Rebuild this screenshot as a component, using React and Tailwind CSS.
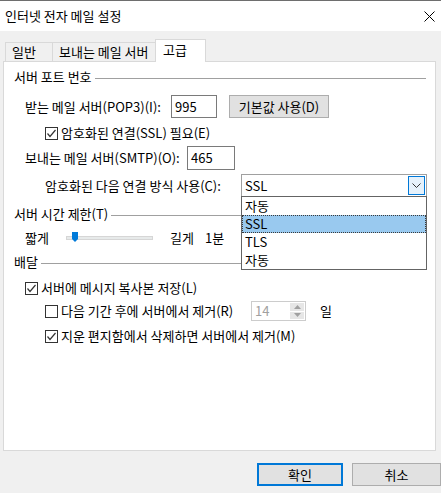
import React from "react";

function CheckBox({ checked }) {
  return (
    <div className="w-[13px] h-[13px] border border-[#333333] bg-white shrink-0 flex items-center justify-center">
      {checked && (
        <svg width="11" height="11" viewBox="0 0 11 11">
          <polyline
            points="1.5,5.5 4,8.5 9.5,2"
            fill="none"
            stroke="#333333"
            strokeWidth="1.2"
          />
        </svg>
      )}
    </div>
  );
}

function GroupHeader({ label, className }) {
  return (
    <div className={"h-[18px] flex items-center pl-[10px] pr-[9px] " + className}>
      <span className="whitespace-nowrap">{label}</span>
      <div className="flex-1 h-px bg-[#a0a0a0] ml-[3px] mt-[2px]" />
    </div>
  );
}

export default function App() {
  const items = ["자동", "SSL", "TLS", "자동"];

  return (
    <div className="w-[441px] h-[493px] bg-[#f0f0f0] border-t border-[#6e6e6e] overflow-hidden flex flex-col text-[13px] leading-[16px] text-black font-['Noto_Sans_CJK_KR','Malgun_Gothic',sans-serif]">
      <div className="h-[30px] bg-white flex items-center justify-between pl-[5px] pr-[6px] shrink-0">
        <span>인터넷 전자 메일 설정</span>
        <svg width="11" height="11" viewBox="0 0 11 11">
          <path d="M0.5 0.5 L10.5 10.5 M10.5 0.5 L0.5 10.5" stroke="#000" strokeWidth="1" />
        </svg>
      </div>

      <div className="h-[30px] flex items-end pl-[5px] shrink-0">
        <div className="w-[47px] h-[19px] border-t border-l border-[#d9d9d9] pl-[6px] flex items-center">
          일반
        </div>
        <div className="w-[103px] h-[19px] border-t border-l border-[#d9d9d9] pl-[6px] flex items-center whitespace-nowrap">
          보내는 메일 서버
        </div>
        <div className="relative z-10 w-[51px] h-[23px] -mb-px bg-white border-t border-l border-r border-[#d9d9d9] pl-[7px] flex items-center pb-[2px]">
          고급
        </div>
      </div>

      <div className="ml-[3px] w-[433px] h-[390px] bg-white border border-[#d9d9d9] flex flex-col shrink-0">
        <GroupHeader label="서버 포트 번호" className="mt-[6px]" />

        <div className="mt-[9px] h-[23px] flex items-center pl-[21px]">
          <span className="w-[146px] whitespace-nowrap">받는 메일 서버(POP3)(I):</span>
          <div className="w-[46px] h-[23px] border border-[#7a7a7a] px-[3px] flex items-center">995</div>
          <button className="ml-[12px] w-[100px] h-[23px] bg-[#e1e1e1] border border-[#adadad] flex items-center justify-center whitespace-nowrap">
            기본값 사용(D)
          </button>
        </div>

        <div className="mt-[6px] h-[18px] flex items-center pl-[41px]">
          <CheckBox checked />
          <span className="ml-[3px]">암호화된 연결(SSL) 필요(E)</span>
        </div>

        <div className="mt-[4px] h-[24px] flex items-center pl-[21px]">
          <span className="w-[162px] whitespace-nowrap">보내는 메일 서버(SMTP)(O):</span>
          <div className="w-[48px] h-[24px] border border-[#7a7a7a] px-[3px] flex items-center">465</div>
        </div>

        <div className="mt-[4px] h-[23px] flex items-center pl-[41px]">
          <span className="w-[196px] whitespace-nowrap">암호화된 다음 연결 방식 사용(C):</span>
          <div className="relative w-[186px] h-[23px] border border-[#a0a0a0] flex items-center bg-white">
            <span className="flex-1 pl-[3px]">SSL</span>
            <div className="w-[17px] h-[19px] mr-[1px] border border-[#0078d7] bg-[#e5f1fb] flex items-center justify-center">
              <svg width="9" height="5" viewBox="0 0 9 5">
                <polyline points="0.5,0.5 4.5,4.5 8.5,0.5" fill="none" stroke="#333" strokeWidth="1" />
              </svg>
            </div>
            <div className="absolute left-[-1px] top-full w-[186px] border border-[#646464] bg-white z-20">
              {items.map((it, i) => (
                <div
                  key={i}
                  className={
                    i === 1
                      ? "h-[18px] flex items-center pl-[2px] bg-[#99c9ef] border border-dotted border-[#3a3a3a]"
                      : "h-[18px] flex items-center pl-[3px]"
                  }
                >
                  {it}
                </div>
              ))}
            </div>
          </div>
        </div>

        <GroupHeader label="서버 시간 제한(T)" className="mt-[8px]" />

        <div className="mt-[6px] h-[18px] flex items-center pl-[21px]">
          <span className="w-[41px]">짧게</span>
          <div className="relative w-[87px] h-[18px] flex items-center">
            <div className="w-full h-[4px] bg-[#e7eaea] border border-[#d6d6d6]" />
            <svg className="absolute left-[6px] top-[3px]" width="6" height="10" viewBox="0 0 6 10">
              <polygon points="0,0 6,0 6,7 3,10 0,7" fill="#007ad9" />
            </svg>
          </div>
          <span className="ml-[17px] w-[35px]">길게</span>
          <span>1분</span>
        </div>

        <GroupHeader label="배달" className="mt-[6px]" />

        <div className="mt-[8px] h-[18px] flex items-center pl-[21px]">
          <CheckBox checked />
          <span className="ml-[3px]">서버에 메시지 복사본 저장(L)</span>
        </div>

        <div className="mt-[4px] h-[20px] flex items-center pl-[41px]">
          <CheckBox />
          <span className="ml-[3px] w-[190px] whitespace-nowrap">다음 기간 후에 서버에서 제거(R)</span>
          <div className="w-[55px] h-[20px] border border-[#cccccc] flex">
            <span className="flex-1 pl-[3px] flex items-center text-[#a0a0a0]">14</span>
            <div className="w-[16px] flex flex-col p-px gap-px">
              <div className="flex-1 bg-[#e6e6e6] flex items-center justify-center">
                <svg width="7" height="4" viewBox="0 0 7 4">
                  <polygon points="0,4 7,4 3.5,0" fill="#a0a0a0" />
                </svg>
              </div>
              <div className="flex-1 bg-[#e6e6e6] flex items-center justify-center">
                <svg width="7" height="4" viewBox="0 0 7 4">
                  <polygon points="0,0 7,0 3.5,4" fill="#a0a0a0" />
                </svg>
              </div>
            </div>
          </div>
          <span className="ml-[14px]">일</span>
        </div>

        <div className="mt-[6px] h-[18px] flex items-center pl-[41px]">
          <CheckBox checked />
          <span className="ml-[3px]">지운 편지함에서 삭제하면 서버에서 제거(M)</span>
        </div>
      </div>

      <div className="mt-[12px] flex pl-[257px] gap-[9px] shrink-0">
        <button className="w-[86px] h-[23px] bg-[#e1e1e1] border-2 border-[#0078d7] flex items-center justify-center">
          확인
        </button>
        <button className="w-[89px] h-[23px] bg-[#e1e1e1] border border-[#adadad] flex items-center justify-center">
          취소
        </button>
      </div>
    </div>
  );
}
